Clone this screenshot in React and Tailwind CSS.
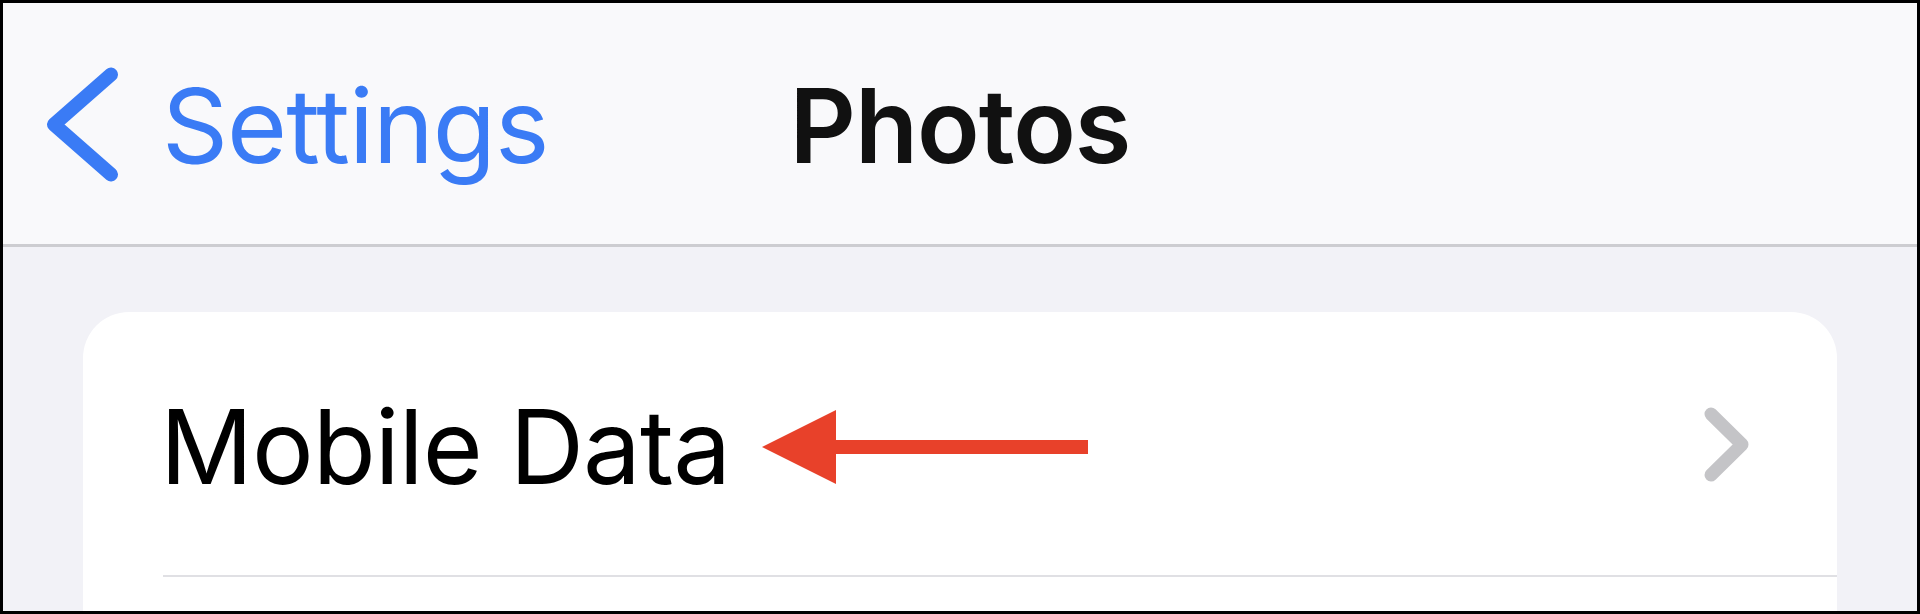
import React from "react";

export default function App() {
  return (
    <div className="w-[1920px] h-[614px] border-[3px] border-black bg-[#f2f2f7] overflow-hidden flex flex-col font-['Inter',sans-serif]">
      <header className="h-[244px] shrink-0 bg-[#f9f9fb] border-b-[3px] border-[#cdcdd1] grid grid-cols-[1fr_auto_1fr] items-center">
        <div className="flex items-center">
          <svg className="ml-[37px]" width="80" height="130" viewBox="0 0 80 130">
            <polyline
              points="71,15.5 14,65.5 71,115.5"
              fill="none"
              stroke="#3a7bf5"
              strokeWidth="14"
              strokeLinecap="round"
              strokeLinejoin="round"
            />
          </svg>
          <span className="ml-[42px] mt-[3px] text-[103px] leading-none text-[#3a7bf5] tracking-[-1px]">Settings</span>
        </div>
        <h1 className="mt-[3px] text-[103px] leading-none font-semibold text-[#111] tracking-[-1px]">Photos</h1>
        <div />
      </header>
      <main className="flex-1 px-[80px] pt-[65px]">
        <div className="bg-white rounded-t-[46px] h-full">
          <div className="relative h-[263px] flex items-center justify-between pl-[77px] pr-[85px]">
            <span className="mt-[5px] text-[103px] leading-none text-black tracking-[-1px]">Mobile Data</span>
            <svg width="50" height="80" viewBox="0 0 50 80">
              <polyline
                points="9,10 40,40.5 9,71"
                fill="none"
                stroke="#c4c4c7"
                strokeWidth="13"
                strokeLinecap="round"
                strokeLinejoin="round"
              />
            </svg>
            <svg className="absolute left-[679px] top-[98px]" width="326" height="74" viewBox="0 0 326 74">
              <polygon points="0,37 74,0 74,74" fill="#e8412a" />
              <rect x="70" y="30" width="256" height="14" fill="#e8412a" />
            </svg>
          </div>
          <div className="ml-[80px] h-[2px] bg-[#e0e0e4]" />
        </div>
      </main>
    </div>
  );
}
